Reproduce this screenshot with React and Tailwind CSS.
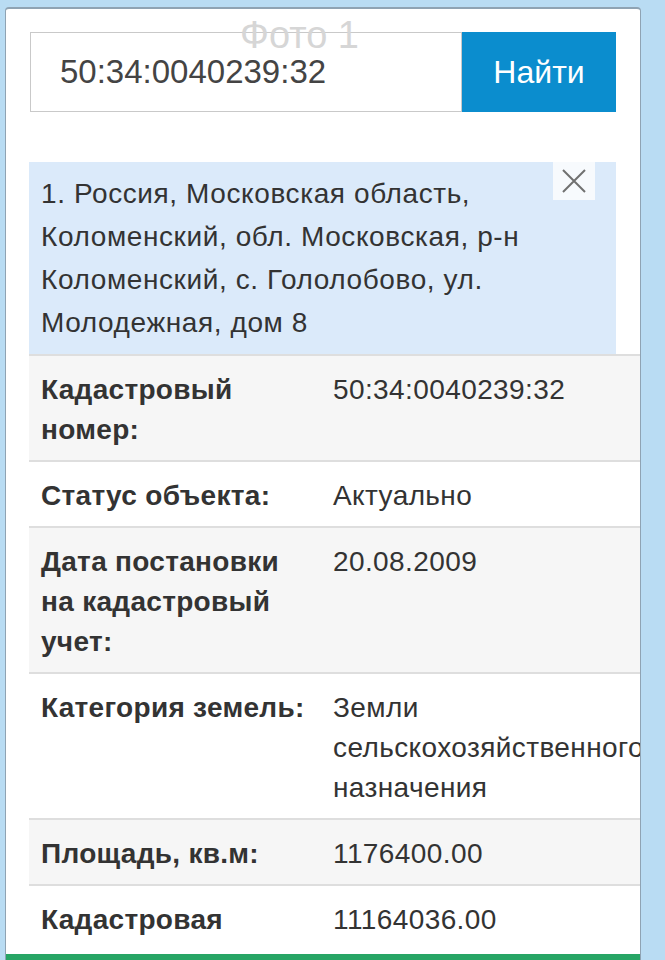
const rows = [
  { label: 'Кадастровый номер:', value: '50:34:0040239:32' },
  { label: 'Статус объекта:', value: 'Актуально' },
  { label: 'Дата постановки на кадастровый учет:', value: '20.08.2009' },
  { label: 'Категория земель:', value: 'Земли сельскохозяйственного назначения' },
  { label: 'Площадь, кв.м:', value: '1176400.00' },
  { label: 'Кадастровая', value: '11164036.00' },
];

export default function App() {
  return (
    <div className="min-h-screen overflow-hidden bg-[#b9dcf3] pl-[5px] pr-[24px] pt-[7px] font-['Liberation_Sans',Arial,sans-serif] text-[#333]">
      <div className="relative overflow-hidden rounded-t-[4px] border border-b-0 border-t-2 border-[#8fa3b3] bg-white">
        {/* watermark */}
        <div className="pointer-events-none absolute left-[234px] top-[7px] text-[38px] leading-none text-[#d6d6d6]">
          Фото 1
        </div>

        <div className="px-[24px] pt-[23px]">
          <div className="flex h-[80px]">
            <div className="flex flex-1 items-center border border-[#c9c9c9] pl-[29px] text-[33px] text-[#444]">
              50:34:0040239:32
            </div>
            <button className="w-[154px] bg-[#0b8dce] text-[32px] text-white">Найти</button>
          </div>
        </div>

        <div className="relative ml-[23px] mr-[24px] mt-[50px] bg-[#dbeafa] pb-[10px] pl-[12px] pr-[56px] pt-[10px] text-[28px] leading-[43px] tracking-[0.6px]">
          <button className="absolute right-[21px] top-0 flex h-[38px] w-[42px] items-center justify-center bg-[#f7fafd]">
            <svg width="26" height="26" viewBox="0 0 26 26" fill="none" stroke="#707070" strokeWidth="2">
              <path d="M2 2L24 24M24 2L2 24" />
            </svg>
          </button>
          1. Россия, Московская область, Коломенский, обл. Московская, р-н Коломенский, с. Гололобово, ул. Молодежная, дом 8
        </div>

        <div className="ml-[23px] text-[28px] leading-[40px]">
          {rows.map((row, i) => (
            <div
              key={i}
              className={`flex border-t-2 border-[#dedede] pb-[10px] pt-[14px] ${i % 2 === 0 ? 'bg-[#f6f6f6]' : 'bg-white'}`}
            >
              <div className="w-[304px] shrink-0 pl-[12px] pr-[20px] font-bold tracking-[0.3px]">{row.label}</div>
              <div className="min-w-0 flex-1 tracking-[0.4px]">{row.value}</div>
            </div>
          ))}
        </div>

        <div className="mt-[4px] h-[8px] bg-[#27a565]"></div>
      </div>
    </div>
  );
}
